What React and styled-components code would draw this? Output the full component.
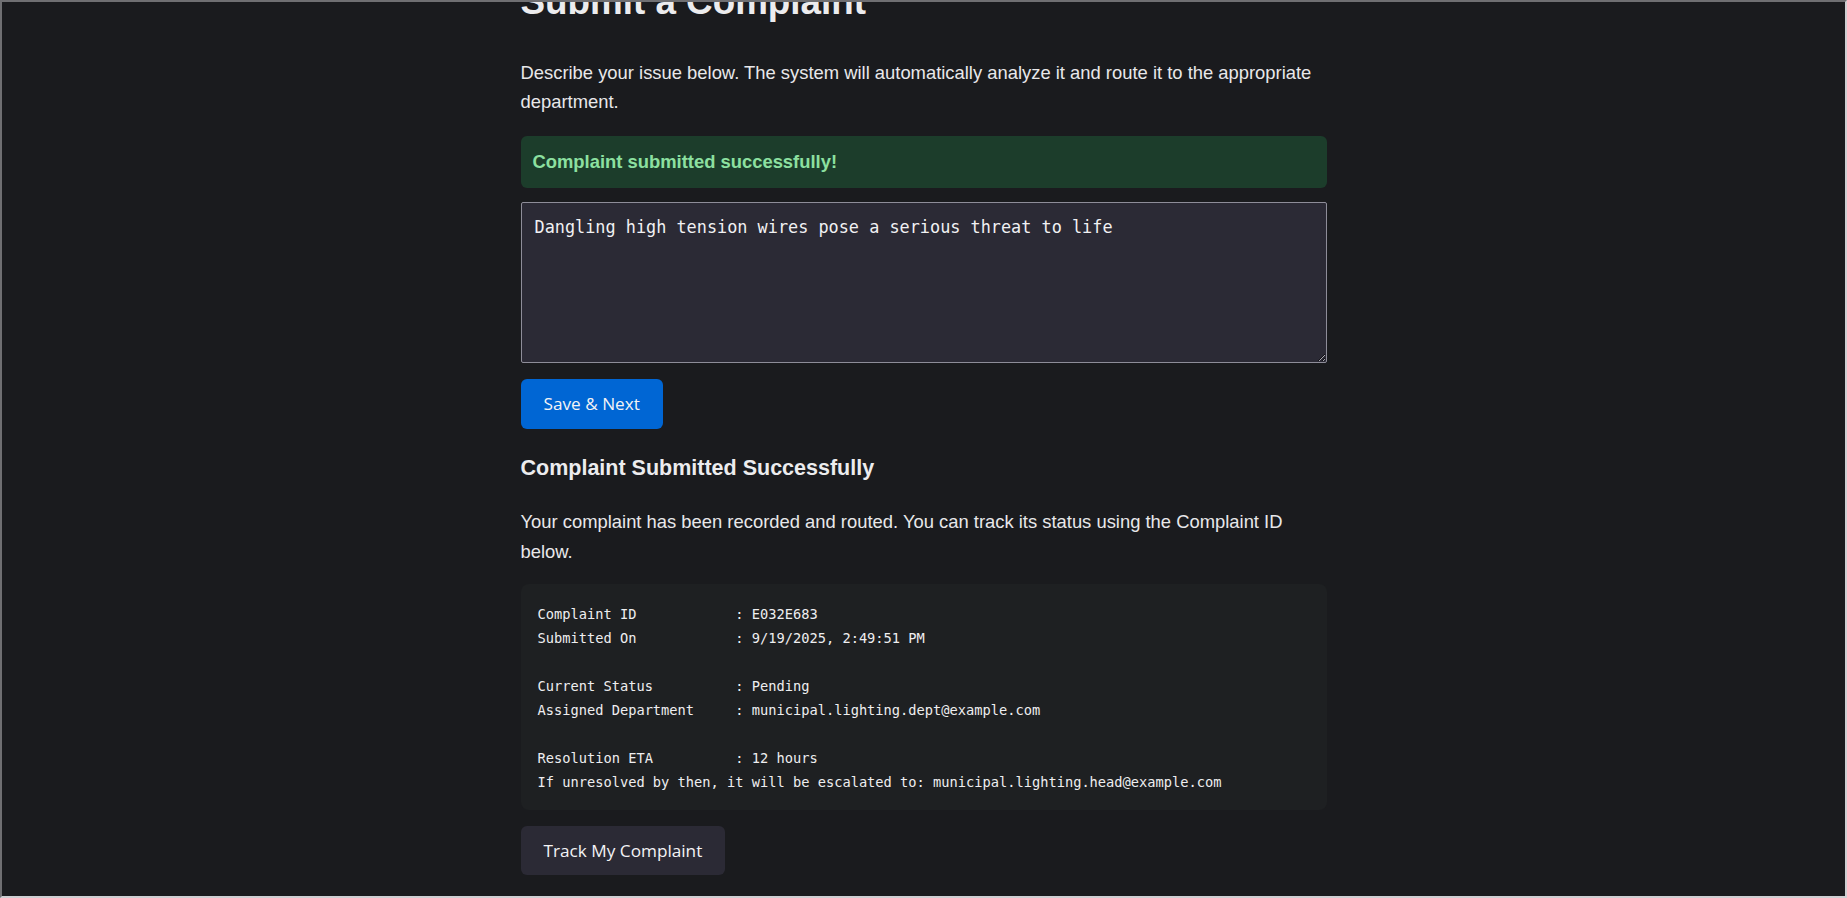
import React from "react";
import styled, { createGlobalStyle } from "styled-components";

const GlobalStyle = createGlobalStyle`
  html, body {
    margin: 0;
    padding: 0;
    background: #1a1b1e;
    overflow: hidden;
  }
  body {
    color: #e8e8ea;
    font-family: "Liberation Sans", Arial, sans-serif;
    font-size: 18.4px;
    line-height: 1.6;
  }
  body::after {
    content: "";
    position: fixed;
    inset: 0;
    border-top: 2px solid #6f6f72;
    border-left: 2px solid #6f6f72;
    border-right: 2px solid #cfcfd2;
    border-bottom: 2px solid #cfcfd2;
    pointer-events: none;
  }
`;

const Page = styled.main`
  width: 806px;
  margin: -27px auto 0;
  display: flex;
  flex-direction: column;
  align-items: flex-start;
`;

const Title = styled.h1`
  margin: 0 0 26px;
  font-size: 36.8px;
  line-height: 1.6;
  font-weight: 700;
  color: #ececee;
`;

const Text = styled.p`
  margin: 0 0 ${(p) => p.$mb || 18}px;
  font-size: 18.4px;
  line-height: 29.44px;
  color: #e8e8ea;
`;

const Alert = styled.div`
  align-self: stretch;
  box-sizing: border-box;
  margin-bottom: 14px;
  padding: 11px 12px 12px;
  border-radius: 6px;
  background: #1c3d2b;
  color: #8ce0a0;
  font-weight: 700;
  font-size: 18.4px;
  line-height: 29.44px;
`;

const Area = styled.textarea`
  align-self: stretch;
  box-sizing: border-box;
  height: 161px;
  margin: 0;
  padding: 12px 13px;
  border: 1px solid #8e8d99;
  border-radius: 2px;
  background: #2b2a35;
  color: #f1f1f3;
  font-family: "DejaVu Sans Mono", "Liberation Mono", monospace;
  font-size: 16.85px;
  line-height: 1.5;
  outline: none;
`;

const Button = styled.button`
  margin-top: 16px;
  padding: 11px 23px;
  border: none;
  border-radius: 6px;
  background: ${(p) => (p.$variant === "primary" ? "#0066d4" : "#2b2a35")};
  color: #f3f3f5;
  font-family: "Open Sans", "Noto Sans", sans-serif;
  font-size: 17.2px;
  line-height: 27.5px;
  cursor: pointer;
`;

const SubHeading = styled.h3`
  margin: 22px 0 22px;
  font-size: 21.5px;
  line-height: 1.6;
  font-weight: 700;
  color: #ececee;
`;

const Details = styled.pre`
  align-self: stretch;
  box-sizing: border-box;
  margin: 0;
  padding: 18px 17px 16px;
  border-radius: 8px;
  background: #1e2022;
  color: #eeeef0;
  font-family: "DejaVu Sans Mono", "Liberation Mono", monospace;
  font-size: 13.7px;
  line-height: 24px;
  white-space: pre;
`;

const row = (label, value) => `${label.padEnd(24)}: ${value}`;

const details = [
  row("Complaint ID", "E032E683"),
  row("Submitted On", "9/19/2025, 2:49:51 PM"),
  "",
  row("Current Status", "Pending"),
  row("Assigned Department", "municipal.lighting.dept@example.com"),
  "",
  row("Resolution ETA", "12 hours"),
  "If unresolved by then, it will be escalated to: municipal.lighting.head@example.com",
].join("\n");

export default function App() {
  return (
    <>
      <GlobalStyle />
      <Page>
        <Title>Submit a Complaint</Title>
        <Text $mb={19}>
          Describe your issue below. The system will automatically analyze it and route it to the
          appropriate department.
        </Text>
        <Alert>Complaint submitted successfully!</Alert>
        <Area defaultValue="Dangling high tension wires pose a serious threat to life" spellCheck={false} />
        <Button $variant="primary">Save &amp; Next</Button>
        <SubHeading>Complaint Submitted Successfully</SubHeading>
        <Text>
          Your complaint has been recorded and routed. You can track its status using the Complaint
          ID below.
        </Text>
        <Details>{details}</Details>
        <Button>Track My Complaint</Button>
      </Page>
    </>
  );
}
